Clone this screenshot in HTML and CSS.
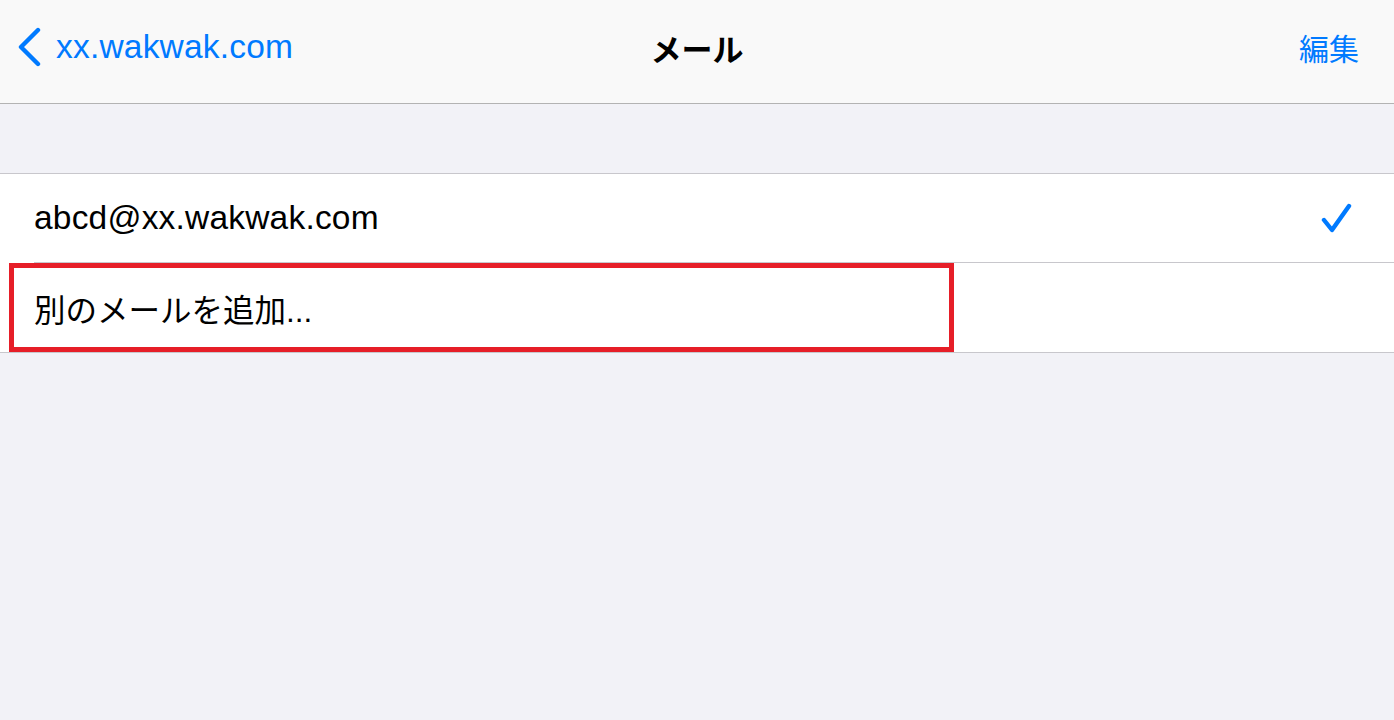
FILE: index.html
```html
<!DOCTYPE html>
<html lang="ja">
<head>
    <meta charset="UTF-8">
    <title>メール</title>
    <link rel="stylesheet" href="styles.css">
</head>
<body>
    <div id="navbar">
        <a class="nav-back" href="#">
            <svg class="chevron" width="26" height="40" viewBox="0 0 26 40">
                <path d="M21 3 L4 20 L21 37" fill="none" stroke="#007aff" stroke-width="4.4" stroke-linecap="round" stroke-linejoin="round"/>
            </svg>
            <span>xx.wakwak.com</span>
        </a>
        <div class="nav-title">メール</div>
        <a class="nav-edit" href="#">編集</a>
    </div>

    <div id="content">
        <div class="group">
            <div class="cell">
                <div class="cell-body">
                    <span class="cell-text">abcd@xx.wakwak.com</span>
                    <svg class="check" width="34" height="32" viewBox="0 0 34 32">
                        <path d="M4 17 L12 27 L29 3" fill="none" stroke="#007aff" stroke-width="4.4" stroke-linecap="round" stroke-linejoin="round"/>
                    </svg>
                </div>
            </div>
            <div class="cell cell-marked">
                <div class="cell-body last">
                    <span class="cell-text jp">別のメールを追加...</span>
                </div>
                <div class="mark"></div>
            </div>
        </div>
    </div>
</body>
</html>
```

FILE: styles.css
```css
*{
    padding: 0;
    margin: 0;
    box-sizing: border-box;
}

body{
    width: 1394px;
    height: 720px;
    background: #f2f2f7;
    font-family: "Liberation Sans", "Noto Sans CJK JP", sans-serif;
    overflow: hidden;
}

a{
    text-decoration: none;
    color: #007aff;
}

#navbar{
    height: 104px;
    background: #f9f9f9;
    border-bottom: 1px solid #b3b3b3;
    display: grid;
    grid-template-columns: 1fr auto 1fr;
    align-items: center;
    padding: 0 26px 9px 26px;
}

.nav-back{
    display: flex;
    align-items: center;
    gap: 13px;
    font-size: 33.5px;
    letter-spacing: 0.2px;
    justify-self: start;
    margin-left: -9px;
}

.nav-title{
    font-family: "Noto Sans CJK JP", sans-serif;
    font-weight: bold;
    font-size: 31px;
    color: #000;
}

.nav-edit{
    justify-self: end;
    margin-right: 9px;
    font-family: "Noto Sans CJK JP", sans-serif;
    font-size: 30px;
}

#content{
    padding-top: 69px;
}

.group{
    background: #fff;
    border-top: 1px solid #c8c7cc;
    border-bottom: 1px solid #c8c7cc;
}

.cell{
    padding-left: 34px;
}

.cell-marked{
    position: relative;
}

.cell-body{
    height: 89px;
    display: flex;
    align-items: center;
    justify-content: space-between;
    padding-right: 40px;
    border-bottom: 1px solid #c8c7cc;
}

.cell-body.last{
    border-bottom: none;
}

.cell-text{
    font-size: 33.5px;
    letter-spacing: 0.2px;
    color: #000;
}

.cell-text.jp{
    font-size: 31.5px;
    letter-spacing: 0;
}

.check{
    margin-top: 2px;
}

/* 赤い枠（注釈） */
.mark{
    position: absolute;
    left: 9px;
    top: 0;
    width: 945px;
    height: 89px;
    border: 5px solid #e61e28;
}
```
